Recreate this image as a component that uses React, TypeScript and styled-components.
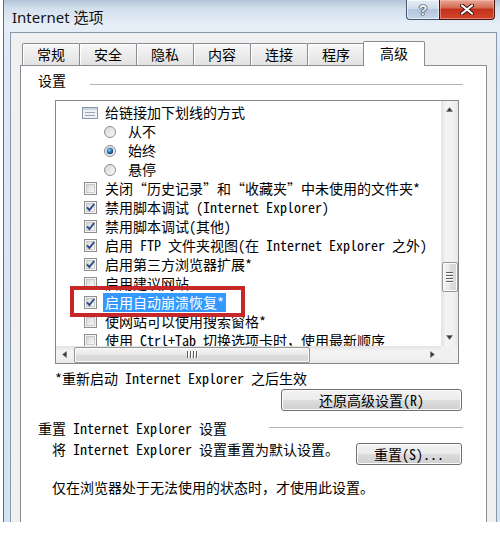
import React from "react";
import styled, { createGlobalStyle } from "styled-components";

const GlobalStyle = createGlobalStyle`
  html, body {
    margin: 0;
    padding: 0;
    background: #fff;
  }
  body {
    width: 500px;
    height: 539px;
    overflow: hidden;
    font-family: "Noto Sans Mono CJK SC", "Noto Sans CJK SC", "Liberation Mono", monospace;
    font-size: 14px;
    color: #000;
  }
`;

const Window = styled.div`
  box-sizing: border-box;
  width: 497px;
  height: 522px;
  margin-left: 3px;
  border-left: 1px solid #5c6d80;
  display: flex;
  flex-direction: column;
  background: linear-gradient(
    to bottom,
    #b3c4d7 0px,
    #d3e0ed 9px,
    #e6eef7 24px,
    #dfe9f4 60px,
    #d4e3f1 100%
  );
`;

const TitleBar = styled.div`
  height: 32px;
  display: flex;
  align-items: flex-start;
  flex: none;
`;

const Title = styled.div`
  margin: 7px 0 0 8px;
  line-height: 20px;
  font-family: "Noto Sans", "Noto Sans CJK SC", sans-serif;
  font-size: 15px;
  color: #111;
`;

const Caption = styled.div`
  margin-left: auto;
  margin-right: 5px;
  display: flex;
`;

const HelpButton = styled.div`
  box-sizing: border-box;
  width: 33px;
  height: 20px;
  border: 1px solid #43566f;
  border-top: none;
  border-right: none;
  border-radius: 0 0 0 4px;
  background: linear-gradient(to bottom, #e6eef6 0%, #cfdcea 45%, #b4c6db 50%, #c4d5e7 100%);
  box-shadow: inset 0 0 0 1px rgba(255, 255, 255, 0.6);
  display: flex;
  align-items: center;
  justify-content: center;
  font-family: "Liberation Sans", sans-serif;
  font-weight: bold;
  font-size: 14px;
  color: #f6f9fc;
  text-shadow: 0 0 1px #1b2837, 0 0 1px #1b2837, 0 0 2px #1b2837;
`;

const CloseButton = styled.div`
  box-sizing: border-box;
  width: 56px;
  height: 20px;
  border: 1px solid #4a1410;
  border-top: none;
  border-radius: 0 0 4px 0;
  background: linear-gradient(to bottom, #e8a797 0%, #d66b55 40%, #c2321c 50%, #d5462c 100%);
  box-shadow: inset 0 0 0 1px rgba(255, 200, 190, 0.45);
  display: flex;
  align-items: center;
  justify-content: center;
`;

const Client = styled.div`
  flex: 1;
  margin: 0 3px 0 6px;
  border: 1px solid #8799ae;
  border-bottom: none;
  background: #f0f0f0;
  padding: 8px 9px 0 9px;
  display: flex;
  flex-direction: column;
  min-height: 0;
`;

const TabStrip = styled.div`
  display: flex;
  align-items: flex-end;
  height: 25px;
  padding-left: 2px;
  margin-bottom: -1px;
  position: relative;
  z-index: 1;
  flex: none;
`;

const Tab = styled.div<{ $active?: boolean }>`
  box-sizing: border-box;
  height: ${(p) => (p.$active ? 25 : 22)}px;
  margin-bottom: ${(p) => (p.$active ? 0 : 1)}px;
  margin-left: ${(p) => (p.$active ? -2 : -1)}px;
  padding: 0 ${(p) => (p.$active ? 16 : 14)}px;
  border: 1px solid #898c95;
  border-bottom: none;
  border-radius: 2px 2px 0 0;
  background: ${(p) =>
    p.$active ? "#fff" : "linear-gradient(to bottom, #f7f7f7 0%, #ececec 50%, #e2e2e2 100%)"};
  box-shadow: ${(p) => (p.$active ? "none" : "inset 1px 1px 0 #fff")};
  font-family: "Noto Sans CJK SC", sans-serif;
  font-size: 14px;
  line-height: ${(p) => (p.$active ? 22 : 20)}px;
  white-space: nowrap;
  position: relative;
  z-index: ${(p) => (p.$active ? 2 : 1)};

  &:first-child {
    margin-left: 0;
  }
`;

const Panel = styled.div`
  flex: 1;
  background: #fff;
  border: 1px solid #898c95;
  border-bottom: none;
  display: flex;
  flex-direction: column;
  padding: 5px 23px 0 17px;
  min-height: 0;
`;

const GroupHeader = styled.div<{ $gap: number; $lineTop: number; $mt: number }>`
  display: flex;
  align-items: flex-start;
  height: 18px;
  line-height: 18px;
  margin-top: ${(p) => p.$mt}px;
  gap: ${(p) => p.$gap}px;
  white-space: nowrap;

  &::after {
    content: "";
    flex: 1;
    height: 1px;
    margin-top: ${(p) => p.$lineTop}px;
    background: #b4b4b4;
  }
`;

const ListBox = styled.div`
  box-sizing: border-box;
  margin: 11px 0 0 17px;
  width: 404px;
  height: 264px;
  flex: none;
  border: 1px solid #828790;
  display: grid;
  grid-template-columns: 385px 17px;
  grid-template-rows: 245px 17px;
`;

const Viewport = styled.div`
  position: relative;
  overflow: hidden;
  padding-top: 2px;
  box-sizing: border-box;
`;

const Row = styled.div<{ $indent: number }>`
  display: flex;
  align-items: center;
  height: 19px;
  padding-left: ${(p) => p.$indent}px;
  white-space: nowrap;
`;

const Label = styled.span<{ $selected?: boolean }>`
  line-height: 19px;
  padding: 0 2px;
  margin-left: -2px;
  background: ${(p) => (p.$selected ? "#3399ff" : "transparent")};
  color: ${(p) => (p.$selected ? "#fff" : "#000")};
`;

const ControlIcon = styled.svg<{ $gap: number }>`
  flex: none;
  margin-right: ${(p) => p.$gap}px;
  display: block;
`;

const Annotation = styled.div`
  position: absolute;
  left: 14px;
  top: 185px;
  width: 175px;
  height: 31px;
  box-sizing: border-box;
  border: 4px solid #c6282a;
  z-index: 3;
`;

const VScroll = styled.div`
  display: flex;
  flex-direction: column;
  background: linear-gradient(to right, #e2e2e2, #f4f4f4 30%, #f1f1f1 70%, #e7e7e7);
`;

const HScroll = styled.div`
  display: flex;
  background: linear-gradient(to bottom, #e2e2e2, #f4f4f4 30%, #f1f1f1 70%, #e7e7e7);
`;

const Corner = styled.div`
  background: #f0f0f0;
`;

const ArrowBox = styled.div`
  flex: none;
  width: 17px;
  height: 17px;
  display: flex;
  align-items: center;
  justify-content: center;
`;

const VTrack = styled.div`
  flex: 1;
  display: flex;
  flex-direction: column;
  align-items: center;
`;

const HTrack = styled.div`
  flex: 1;
  display: flex;
  align-items: center;
`;

const VThumb = styled.div<{ $offset: number; $size: number }>`
  box-sizing: border-box;
  margin-top: ${(p) => p.$offset}px;
  width: 16px;
  height: ${(p) => p.$size}px;
  border: 1px solid #979797;
  border-radius: 2px;
  background: linear-gradient(to right, #f4f4f4, #eaeaea 45%, #dadada 55%, #d7d7d7);
  box-shadow: inset 0 0 0 1px #fbfbfb;
  display: flex;
  flex-direction: column;
  align-items: center;
  justify-content: center;
  gap: 1px;
`;

const HThumb = styled.div<{ $offset: number; $size: number }>`
  box-sizing: border-box;
  margin-left: ${(p) => p.$offset}px;
  height: 16px;
  width: ${(p) => p.$size}px;
  border: 1px solid #979797;
  border-radius: 2px;
  background: linear-gradient(to bottom, #f4f4f4, #eaeaea 45%, #dadada 55%, #d7d7d7);
  box-shadow: inset 0 0 0 1px #fbfbfb;
  display: flex;
  align-items: center;
  justify-content: center;
  gap: 1px;
`;

const Grip = styled.span<{ $vertical?: boolean }>`
  display: block;
  width: ${(p) => (p.$vertical ? 7 : 1)}px;
  height: ${(p) => (p.$vertical ? 1 : 7)}px;
  background: #5d5d5d;
  box-shadow: ${(p) => (p.$vertical ? "0 1px 0 #fff" : "1px 0 0 #fff")};
  margin: ${(p) => (p.$vertical ? "0 0 1px 0" : "0 1px 0 0")};
`;

const Note = styled.div`
  margin: 5px 0 0 17px;
  line-height: 18px;
  white-space: nowrap;
`;

const PushButton = styled.button<{ $w: number }>`
  box-sizing: border-box;
  width: ${(p) => p.$w}px;
  height: 22px;
  padding: 0;
  border: 1px solid #707070;
  border-radius: 3px;
  background: linear-gradient(to bottom, #f2f2f2 0%, #ebebeb 50%, #dddddd 51%, #cfcfcf 100%);
  box-shadow: inset 0 0 0 1px #fcfcfc;
  font-family: inherit;
  font-size: 14px;
  line-height: 20px;
  color: #000;
  flex: none;
`;

const RestoreButton = styled(PushButton)`
  align-self: flex-end;
  margin: 2px 1px 0 0;
`;

const ResetRow = styled.div`
  display: flex;
  align-items: flex-start;
  justify-content: space-between;
  padding-left: 14px;
  margin-top: 3px;
  line-height: 18px;
  white-space: nowrap;
`;

const ResetButton = styled(PushButton)`
  margin: 3px 1px 0 0;
`;

const Hint = styled.div`
  padding-left: 14px;
  margin-top: 13px;
  line-height: 18px;
  white-space: nowrap;
`;

type Item = {
  kind: "group" | "check" | "radio";
  label: string;
  checked?: boolean;
  selected?: boolean;
};

const items: Item[] = [
  { kind: "group", label: "给链接加下划线的方式" },
  { kind: "radio", label: "从不" },
  { kind: "radio", label: "始终", checked: true },
  { kind: "radio", label: "悬停" },
  { kind: "check", label: "关闭“历史记录”和“收藏夹”中未使用的文件夹*" },
  { kind: "check", label: "禁用脚本调试 (Internet Explorer)", checked: true },
  { kind: "check", label: "禁用脚本调试(其他)", checked: true },
  { kind: "check", label: "启用 FTP 文件夹视图(在 Internet Explorer 之外)", checked: true },
  { kind: "check", label: "启用第三方浏览器扩展*", checked: true },
  { kind: "check", label: "启用建议网站" },
  { kind: "check", label: "启用自动崩溃恢复*", checked: true, selected: true },
  { kind: "check", label: "使网站可以使用搜索窗格*" },
  { kind: "check", label: "使用 Ctrl+Tab 切换选项卡时，使用最新顺序" },
];

const tabs = ["常规", "安全", "隐私", "内容", "连接", "程序", "高级"];

const CheckIcon = ({ checked }: { checked?: boolean }) => (
  <ControlIcon $gap={8} width={13} height={13} viewBox="0 0 13 13">
    <defs>
      <linearGradient id="cbFill" x1="0" y1="0" x2="1" y2="1">
        <stop offset="0" stopColor="#d6d6d6" />
        <stop offset="1" stopColor="#fafafa" />
      </linearGradient>
    </defs>
    <rect x="0.5" y="0.5" width="12" height="12" fill="#f4f4f4" stroke="#8e8f8f" />
    <rect x="2.5" y="2.5" width="8" height="8" fill="url(#cbFill)" stroke="#b9b9b9" strokeWidth="0.7" />
    {checked && (
      <path d="M3 6.4 L5.4 9 L10.2 3" fill="none" stroke="#2a4b8d" strokeWidth="1.9" />
    )}
  </ControlIcon>
);

const RadioIcon = ({ checked }: { checked?: boolean }) => (
  <ControlIcon $gap={12} width={12} height={12} viewBox="0 0 12 12">
    <defs>
      <linearGradient id="rbFill" x1="0" y1="0" x2="1" y2="1">
        <stop offset="0" stopColor="#d4d4d4" />
        <stop offset="1" stopColor="#fbfbfb" />
      </linearGradient>
      <radialGradient id="rbDot" cx="0.4" cy="0.35" r="0.7">
        <stop offset="0" stopColor="#8fd5f6" />
        <stop offset="0.5" stopColor="#2f78b8" />
        <stop offset="1" stopColor="#17396e" />
      </radialGradient>
    </defs>
    <circle cx="6" cy="6" r="5.5" fill="url(#rbFill)" stroke="#8e8f8f" />
    {checked && <circle cx="6" cy="6" r="3.2" fill="url(#rbDot)" />}
  </ControlIcon>
);

const GroupIcon = () => (
  <ControlIcon $gap={7} width={16} height={12} viewBox="0 0 16 12">
    <rect x="0.5" y="0.5" width="15" height="11" fill="#eef2f6" stroke="#8a96a6" />
    <rect x="1" y="1" width="14" height="2" fill="#c9d5e3" />
    <line x1="3" y1="5.5" x2="13" y2="5.5" stroke="#9ba7b6" />
    <line x1="3" y1="8.5" x2="13" y2="8.5" stroke="#9ba7b6" />
  </ControlIcon>
);

const Arrow = ({ dir }: { dir: "up" | "down" | "left" | "right" }) => {
  const pts = {
    up: "0.5,4.5 3.5,0.5 6.5,4.5",
    down: "0.5,0.5 3.5,4.5 6.5,0.5",
    left: "4.5,0.5 0.5,3.5 4.5,6.5",
    right: "0.5,0.5 4.5,3.5 0.5,6.5",
  }[dir];
  const vertical = dir === "up" || dir === "down";
  return (
    <svg width={vertical ? 7 : 5} height={vertical ? 5 : 7} viewBox={vertical ? "0 0 7 5" : "0 0 5 7"}>
      <polygon points={pts} fill="#3a3a3a" stroke="#6a6a6a" strokeWidth="0.5" />
    </svg>
  );
};

export default function App() {
  return (
    <>
      <GlobalStyle />
      <Window>
        <TitleBar>
          <Title>Internet 选项</Title>
          <Caption>
            <HelpButton>?</HelpButton>
            <CloseButton>
              <svg width="14" height="11" viewBox="0 0 14 11">
                <path d="M2 1.5 L12 9.5 M12 1.5 L2 9.5" stroke="#3b0f0a" strokeWidth="4" strokeLinecap="round" />
                <path d="M2 1.5 L12 9.5 M12 1.5 L2 9.5" stroke="#fff" strokeWidth="2.2" strokeLinecap="round" />
              </svg>
            </CloseButton>
          </Caption>
        </TitleBar>
        <Client>
          <TabStrip>
            {tabs.map((t) => (
              <Tab key={t} $active={t === "高级"}>
                {t}
              </Tab>
            ))}
          </TabStrip>
          <Panel>
            <GroupHeader $gap={24} $lineTop={13} $mt={0}>
              设置
            </GroupHeader>
            <ListBox>
              <Viewport>
                {items.map((it, i) => (
                  <Row key={i} $indent={it.kind === "radio" ? 48 : it.kind === "group" ? 26 : 28}>
                    {it.kind === "group" && <GroupIcon />}
                    {it.kind === "radio" && <RadioIcon checked={it.checked} />}
                    {it.kind === "check" && <CheckIcon checked={it.checked} />}
                    <Label $selected={it.selected}>{it.label}</Label>
                  </Row>
                ))}
                <Annotation />
              </Viewport>
              <VScroll>
                <ArrowBox>
                  <Arrow dir="up" />
                </ArrowBox>
                <VTrack>
                  <VThumb $offset={144} $size={30}>
                    <Grip $vertical />
                    <Grip $vertical />
                    <Grip $vertical />
                    <Grip $vertical />
                  </VThumb>
                </VTrack>
                <ArrowBox>
                  <Arrow dir="down" />
                </ArrowBox>
              </VScroll>
              <HScroll>
                <ArrowBox>
                  <Arrow dir="left" />
                </ArrowBox>
                <HTrack>
                  <HThumb $offset={1} $size={236}>
                    <Grip />
                    <Grip />
                    <Grip />
                    <Grip />
                  </HThumb>
                </HTrack>
                <ArrowBox>
                  <Arrow dir="right" />
                </ArrowBox>
              </HScroll>
              <Corner />
            </ListBox>
            <Note>*重新启动 Internet Explorer 之后生效</Note>
            <RestoreButton $w={181}>还原高级设置(R)</RestoreButton>
            <GroupHeader $gap={42} $lineTop={8} $mt={8}>
              重置 Internet Explorer 设置
            </GroupHeader>
            <ResetRow>
              <span>将 Internet Explorer 设置重置为默认设置。</span>
              <ResetButton $w={106}>重置(S)...</ResetButton>
            </ResetRow>
            <Hint>仅在浏览器处于无法使用的状态时，才使用此设置。</Hint>
          </Panel>
        </Client>
      </Window>
    </>
  );
}
